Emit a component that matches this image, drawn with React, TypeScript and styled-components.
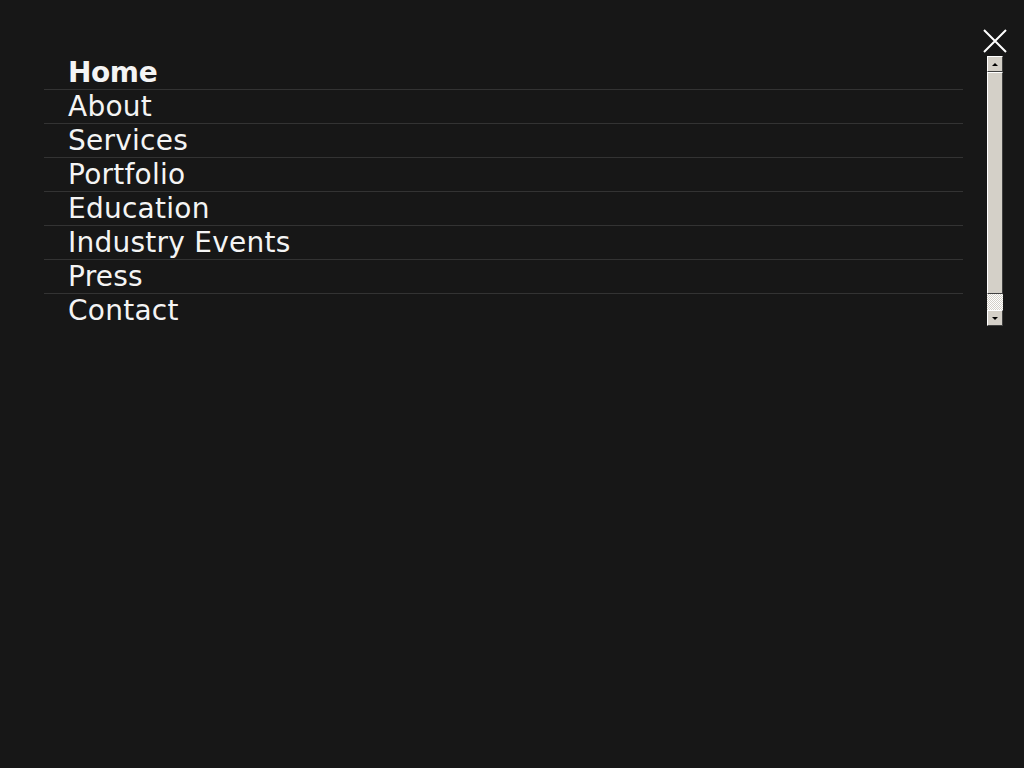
import React from 'react'
import styled, { createGlobalStyle } from 'styled-components'

const GlobalStyle = createGlobalStyle`
  html, body {
    margin: 0;
    padding: 0;
    background: #171717;
    height: 100%;
  }
  #root {
    min-height: 100vh;
  }
`

const links = ['Home', 'About', 'Services', 'Portfolio', 'Education', 'Industry Events', 'Press', 'Contact']

const Overlay = styled.div`
  display: flex;
  min-height: 100vh;
  background: #171717;
  font-family: 'DejaVu Sans', Verdana, sans-serif;
`

const Menu = styled.ul`
  flex: 1;
  list-style: none;
  margin: 56px 0 0 44px;
  padding: 0;
  align-self: flex-start;
`

const Item = styled.li<{ $last?: boolean }>`
  height: 34px;
  box-sizing: border-box;
  border-bottom: ${(p) => (p.$last ? 'none' : '1px solid #333333')};
`

const Link = styled.a<{ $active?: boolean }>`
  display: block;
  padding-left: 24px;
  color: #f4f4f4;
  font-size: 28px;
  line-height: 34px;
  letter-spacing: ${(p) => (p.$active ? '-0.4px' : '0.25px')};
  font-weight: ${(p) => (p.$active ? 700 : 400)};
  text-decoration: none;
`

const Side = styled.div`
  width: 16px;
  margin-left: 24px;
  margin-right: 21px;
  padding-top: 29px;
  display: flex;
  flex-direction: column;
  align-items: center;
`

const Close = styled.button`
  width: 24px;
  height: 24px;
  padding: 0;
  border: 0;
  background: none;
  margin: 0 -4px 3px;
  display: block;
  flex-shrink: 0;
`

const Scrollbar = styled.div`
  width: 16px;
  height: 270px;
  display: flex;
  flex-direction: column;
  background-color: #eeede9;
  background-image: repeating-conic-gradient(#d4d0c8 0 25%, #ffffff 0 50%);
  background-size: 2px 2px;
`

const Arrow = styled.div<{ $down?: boolean }>`
  height: 16px;
  box-sizing: border-box;
  background: #d4d0c8;
  border: 1px solid;
  border-color: #ffffff #404040 #404040 #ffffff;
  display: flex;
  align-items: center;
  justify-content: center;
  &::after {
    content: '';
    width: 0;
    height: 0;
    border-left: 3px solid transparent;
    border-right: 3px solid transparent;
    ${(p) => (p.$down ? 'border-top: 3px solid #000;' : 'border-bottom: 3px solid #000;')}
  }
`

const Thumb = styled.div`
  height: 222px;
  box-sizing: border-box;
  background: #d4d0c8;
  border: 1px solid;
  border-color: #ffffff #404040 #404040 #ffffff;
`

const Track = styled.div`
  flex: 1;
`

const App: React.FC = () => {
  return (
    <>
      <GlobalStyle />
      <Overlay>
        <Menu>
          {links.map((l, i) => (
            <Item key={l} $last={i === links.length - 1}>
              <Link href="#" $active={i === 0}>{l}</Link>
            </Item>
          ))}
        </Menu>
        <Side>
          <Close aria-label="Close">
            <svg width="24" height="24" viewBox="0 0 24 24">
              <path d="M1 1 L23 23 M23 1 L1 23" stroke="#ffffff" strokeWidth="2" />
            </svg>
          </Close>
          <Scrollbar>
            <Arrow />
            <Thumb />
            <Track />
            <Arrow $down />
          </Scrollbar>
        </Side>
      </Overlay>
    </>
  )
}

export default App
